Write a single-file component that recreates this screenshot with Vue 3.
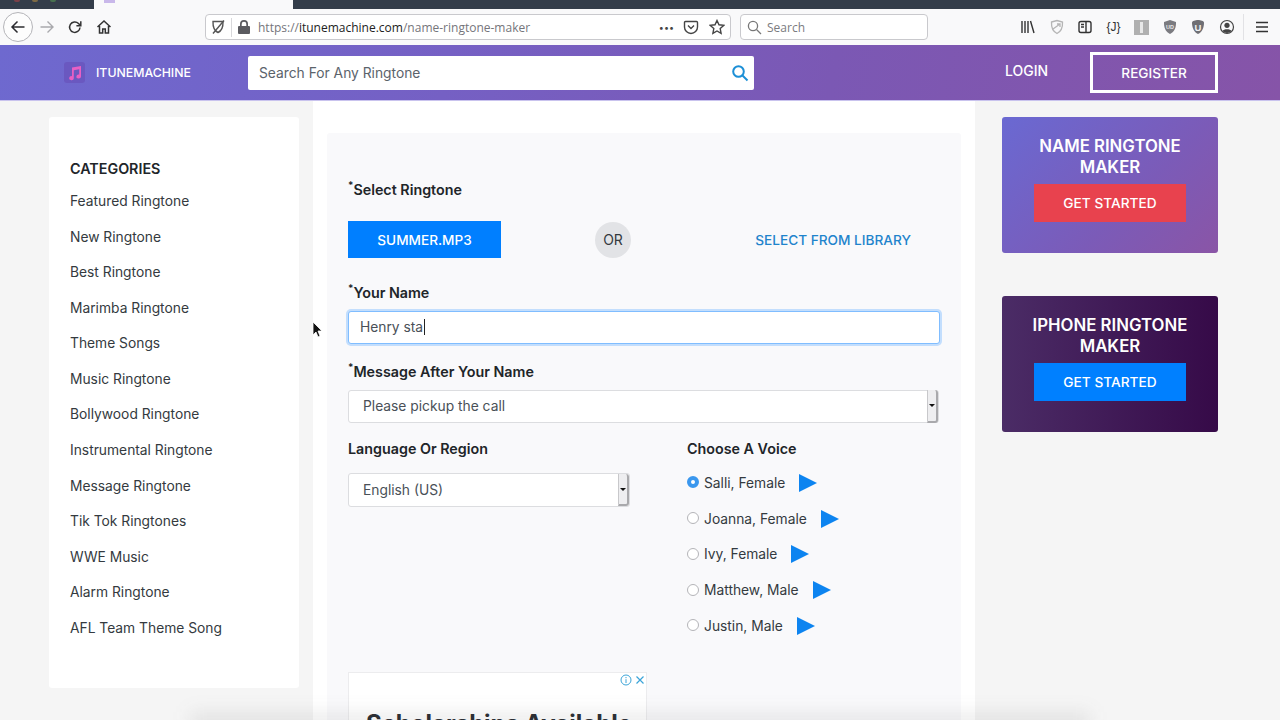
<template>
  <div class="page">
    <div class="tabstrip">
      <span class="light red"></span>
      <span class="light amber"></span>
      <span class="light green"></span>
      <div class="tab"><span class="tab-icon"></span></div>
    </div>

    <div class="toolbar">
      <div class="nav">
        <button class="back">
          <svg width="18" height="18" viewBox="0 0 18 18" fill="none" stroke="#2b2b2f" stroke-width="1.5"><path d="M15.500 9H3M8.500 3.500 3 9l5.500 5.500" /></svg>
        </button>
        <svg class="fwd" width="16" height="16" viewBox="0 0 16 16" fill="none" stroke="#a9a9ad" stroke-width="1.4"><path d="M1.500 8H14M8.500 2.500 14 8l-5.500 5.500" /></svg>
        <svg class="reload" width="16" height="16" viewBox="0 0 16 16" fill="none" stroke="#333" stroke-width="1.5"><path d="M13 8.500A5.200 5.200 0 1 1 11.500 4.500L13.500 6.500" /><path d="M13.800 2.300v4.400H9.400" /></svg>
        <svg class="home" width="16" height="16" viewBox="0 0 16 16" fill="none" stroke="#333" stroke-width="1.5"><path d="M1.500 8 8 2l6.500 6M3.500 7v7h3.200v-4h2.600v4h3.200V7" /></svg>
      </div>

      <div class="urlbar">
        <svg class="shield" width="16" height="16" viewBox="0 0 16 16" fill="none" stroke="#555" stroke-width="1.400"><path d="M3 2.500h10c.2 5.500-1.500 9.500-5 11-3.500-1.500-5.200-5.500-5-11z" /><path d="M14 1.500 3 14.500" /></svg>
        <span class="url-sep"></span>
        <svg class="lock" width="12" height="14" viewBox="0 0 12 14" fill="#5b5b60"><path d="M2 6V4a4 4 0 0 1 8 0v2h1a1 1 0 0 1 1 1v6a1 1 0 0 1-1 1H1a1 1 0 0 1-1-1V7a1 1 0 0 1 1-1zm1.700 0h4.600V4a2.300 2.300 0 0 0-4.600 0z" /></svg>
        <span class="url"><i>https://</i>itunemachine.com<i>/name-ringtone-maker</i></span>
        <span class="dots">•••</span>
        <svg class="pocket" width="16" height="16" viewBox="0 0 16 16" fill="none" stroke="#444" stroke-width="1.400"><path d="M2.500 2.500h11a1 1 0 0 1 1 1V8a6.500 6.500 0 0 1-13 0V3.500a1 1 0 0 1 1-1z" /><path d="m5 6.500 3 3 3-3" /></svg>
        <svg class="star" width="16" height="16" viewBox="0 0 16 16" fill="none" stroke="#444" stroke-width="1.400"><path d="m8 1.500 2 4.300 4.700.6-3.500 3.200.9 4.700L8 12l-4.100 2.300.9-4.700L1.300 6.400 6 5.800z" /></svg>
      </div>

      <div class="searchbar">
        <svg width="15" height="15" viewBox="0 0 15 15" fill="none" stroke="#777" stroke-width="1.300"><circle cx="6" cy="6" r="4.600" /><path d="m9.500 9.500 4.500 4.500" /></svg>
        <span>Search</span>
      </div>

      <div class="tools">
        <svg width="16" height="16" viewBox="0 0 16 16" fill="none" stroke="#333" stroke-width="1.400"><path d="M2 2v12M5 2v12M8 2v12M10.500 2l3.500 12" /></svg>
        <svg width="16" height="16" viewBox="0 0 16 16" fill="none" stroke="#b5b5b5" stroke-width="1.300"><path d="M2.500 3 8 1.500 13.500 3c.3 5.500-1.500 9.500-5.500 11.500C4 12.500 2.200 8.500 2.500 3z" /><path d="m4 10 7-5M8 5h3v3" /></svg>
        <svg width="16" height="16" viewBox="0 0 16 16" fill="none" stroke="#333" stroke-width="1.400"><rect x="2" y="2.500" width="12" height="11" rx="2" /><path d="M9 2.500v11" /><path d="M4 5.500h3M4 8h3" /></svg>
        <span class="braces">{J}</span>
        <span class="ext-box"><b></b></span>
        <svg width="16" height="16" viewBox="0 0 16 16" fill="#7b7b80"><path d="M8 1 14 3c.2 5.500-1.500 9.800-6 12C3.500 12.800 1.800 8.500 2 3z" /><text x="8" y="9.500" text-anchor="middle" font-size="5.500" font-weight="700" font-family="Liberation Sans, sans-serif" fill="#e8e8e8">UD</text></svg>
        <svg width="16" height="16" viewBox="0 0 16 16" fill="#6f6f74"><path d="M8 1c2.500 0 6 1 6 2.500 0 5.500-2 9.500-6 11.500-4-2-6-6-6-11.500C2 2 5.500 1 8 1z" /><text x="8" y="11.500" text-anchor="middle" font-size="9.500" font-weight="700" font-family="Liberation Sans, sans-serif" fill="#f2f2f2">U</text></svg>
        <svg width="16" height="16" viewBox="0 0 16 16"><circle cx="8" cy="8" r="6.500" fill="none" stroke="#444" stroke-width="1.200" /><circle cx="8" cy="6.300" r="2.600" fill="#444" /><path d="M3.500 12c1-2.500 8-2.500 9 0-2 2.600-7 2.600-9 0z" fill="#444" /></svg>
        <span class="tool-sep"></span>
        <svg width="14" height="14" viewBox="0 0 14 14" fill="none" stroke="#333" stroke-width="1.500"><path d="M1 2.500h12M1 7h12M1 11.500h12" /></svg>
      </div>
    </div>

    <header class="site-head">
      <div class="brand">
        <span class="brand-icon">
          <svg width="14" height="16" viewBox="0 0 14 16" fill="#e85fc4"><path d="M4 2.500 13 1v10.500a2.300 2 0 1 1-1.800-2V4.300L5.800 5.200v8a2.300 2 0 1 1-1.800-2z" /></svg>
        </span>
        <span class="brand-name">ITUNEMACHINE</span>
      </div>
      <div class="site-search">
        <span>Search For Any Ringtone</span>
        <svg width="18" height="18" viewBox="0 0 18 18" fill="none" stroke="#1c8fd6" stroke-width="2"><circle cx="7.500" cy="7.500" r="5.300" /><path d="m11.500 11.500 5 5" /></svg>
      </div>
      <a class="login">LOGIN</a>
      <a class="register">REGISTER</a>
    </header>

    <div class="content">
      <aside class="sidebar">
        <h3>CATEGORIES</h3>
        <ul>
          <li v-for="cat in categories" :key="cat">{{ cat }}</li>
        </ul>
      </aside>

      <main class="main">
        <div class="panel">
          <label class="field-label first"><sup>*</sup>Select Ringtone</label>
          <div class="pick-row">
            <button class="file-btn">SUMMER.MP3</button>
            <span class="or">OR</span>
            <a class="library">SELECT FROM LIBRARY</a>
          </div>

          <label class="field-label name"><sup>*</sup>Your Name</label>
          <div class="name-input">Henry sta<span class="caret"></span></div>

          <label class="field-label msg"><sup>*</sup>Message After Your Name</label>
          <div class="select">
            <span>Please pickup the call</span>
            <span class="select-arrow"></span>
          </div>

          <div class="two-col">
            <div class="col-lang">
              <label class="field-label">Language Or Region</label>
              <div class="select lang">
                <span>English (US)</span>
                <span class="select-arrow"></span>
              </div>
            </div>
            <div class="col-voice">
              <label class="field-label">Choose A Voice</label>
              <div class="voice" v-for="(v, i) in voices" :key="v">
                <span class="radio" :class="{ on: i === 0 }"></span>
                <span class="voice-name">{{ v }}</span>
                <span class="play"></span>
              </div>
            </div>
          </div>

          <div class="ad">
            <div class="ad-tools">
              <svg width="12" height="12" viewBox="0 0 12 12" fill="none" stroke="#3ba4d8" stroke-width="1"><circle cx="6" cy="6" r="5" /><path d="M6 3v1.200M6 5.200V9" /></svg>
              <svg width="10" height="10" viewBox="0 0 10 10" fill="none" stroke="#3ba4d8" stroke-width="1.200"><path d="m1.500 1.500 7 7M8.500 1.500l-7 7" /></svg>
            </div>
            <div class="ad-title">Scholarships Available</div>
          </div>
        </div>
      </main>

      <aside class="promos">
        <div class="promo purple">
          <h4>NAME RINGTONE MAKER</h4>
          <button class="red">GET STARTED</button>
        </div>
        <div class="promo dark">
          <h4>IPHONE RINGTONE MAKER</h4>
          <button class="blue">GET STARTED</button>
        </div>
      </aside>
    </div>

    <div class="bottom-shade"></div>

    <svg class="cursor" width="12" height="18" viewBox="0 0 12 18"><path d="M1 1v13l3-3 2 5 2-1-2-5h4z" fill="#111" stroke="#fff" stroke-width=".8" /></svg>
  </div>
</template>

<script setup>
const categories = [
  'Featured Ringtone',
  'New Ringtone',
  'Best Ringtone',
  'Marimba Ringtone',
  'Theme Songs',
  'Music Ringtone',
  'Bollywood Ringtone',
  'Instrumental Ringtone',
  'Message Ringtone',
  'Tik Tok Ringtones',
  'WWE Music',
  'Alarm Ringtone',
  'AFL Team Theme Song',
]

const voices = ['Salli, Female', 'Joanna, Female', 'Ivy, Female', 'Matthew, Male', 'Justin, Male']
</script>

<style>
html, body {
  margin: 0;
  height: 100%;
  overflow: hidden;
}
</style>

<style scoped>
.page {
  position: relative;
  width: 1280px;
  height: 720px;
  overflow: hidden;
  background: #f5f5f5;
  font-family: Inter, "Liberation Sans", sans-serif;
  color: #212529;
}

.tabstrip {
  position: relative;
  height: 9px;
  background: #343d4a;
  padding-left: 94px;
}
.light {
  position: absolute;
  top: 0;
  width: 6px;
  height: 2px;
  border-radius: 0 0 3px 3px;
}
.light.red { left: 14px; background: #7a4048; }
.light.amber { left: 32px; background: #7d6a45; }
.light.green { left: 50px; background: #47704f; }
.tab {
  width: 199px;
  height: 9px;
  background: #f9f9fa;
}
.tab-icon {
  display: block;
  width: 11px;
  height: 3px;
  margin-left: 10px;
  background: #c9b8ea;
}

.toolbar {
  height: 36px;
  display: flex;
  align-items: center;
  background: #f9f9fa;
}
.nav {
  display: flex;
  align-items: center;
  width: 205px;
  padding-left: 3px;
  box-sizing: border-box;
}
.back {
  width: 30px;
  height: 30px;
  padding: 0;
  border: 1px solid #b5b5b9;
  border-radius: 50%;
  background: #fdfdfd;
  display: flex;
  align-items: center;
  justify-content: center;
}
.fwd { margin-left: 6px; }
.reload { margin-left: 12px; }
.home { margin-left: 13px; }

.urlbar {
  width: 526px;
  height: 26px;
  box-sizing: border-box;
  display: flex;
  align-items: center;
  background: #fff;
  border: 1px solid #c9c9cd;
  border-radius: 4px;
  padding: 0 4px;
}
.url-sep {
  width: 1px;
  height: 19px;
  background: #d8d8db;
  margin: 0 6px 0 5px;
}
.lock { margin-right: 8px; }
.url {
  flex: 1;
  font-size: 12px;
  color: #222;
  font-family: "Open Sans", "Liberation Sans", sans-serif;
}
.url i {
  font-style: normal;
  color: #75757b;
}
.dots {
  font-size: 9px;
  color: #444;
  margin-right: 9px;
}
.pocket { margin-right: 10px; }
.star { margin-right: 1px; }

.searchbar {
  width: 188px;
  height: 26px;
  box-sizing: border-box;
  margin-left: 9px;
  display: flex;
  align-items: center;
  gap: 5px;
  background: #fff;
  border: 1px solid #c9c9cd;
  border-radius: 4px;
  padding-left: 6px;
  font-size: 12px;
  font-family: "Open Sans", "Liberation Sans", sans-serif;
  color: #7b7b80;
}

.tools {
  flex: 1;
  display: flex;
  align-items: center;
  padding-left: 92px;
  gap: 12.500px;
}
.braces {
  font-size: 12px;
  width: 16px;
  text-align: center;
  white-space: nowrap;
  font-family: "Liberation Sans", sans-serif;
  color: #333;
}
.ext-box {
  width: 15px;
  height: 15px;
  background: #b0b0b0;
  display: flex;
  justify-content: center;
}
.ext-box b {
  width: 3px;
  height: 11px;
  margin-top: 2px;
  background: #e8e8e8;
}
.tool-sep {
  width: 1px;
  height: 26px;
  background: #e2e2e5;
  margin: 0 -2px 0 -4px;
}

.site-head {
  height: 56px;
  display: flex;
  align-items: center;
  background: linear-gradient(100deg, #6e69cf 0%, #7560c4 35%, #7b58b4 65%, #8654a8 100%);
  border-bottom: 1px solid #c9c3ee;
  box-sizing: border-box;
  padding-left: 64px;
}
.brand {
  width: 184px;
  display: flex;
  align-items: center;
  gap: 11px;
}
.brand-icon {
  width: 21px;
  height: 21px;
  border-radius: 3px;
  background: #6a58c0;
  display: flex;
  align-items: center;
  justify-content: center;
}
.brand-name {
  font-size: 12.300px;
  font-weight: 500;
  color: #fff;
}
.site-search {
  width: 506px;
  height: 34px;
  box-sizing: border-box;
  background: #fff;
  border-radius: 2px;
  display: flex;
  align-items: center;
  justify-content: space-between;
  padding: 0 5px 0 11px;
  font-size: 13.800px;
  color: #5b636b;
}
.login {
  margin-left: 251px;
  margin-bottom: 4px;
  font-size: 14px;
  font-weight: 500;
  color: #fff;
}
.register {
  margin-left: 42px;
  width: 128px;
  height: 41px;
  box-sizing: border-box;
  border: 3px solid #fff;
  display: flex;
  align-items: center;
  justify-content: center;
  font-size: 13.600px;
  font-weight: 500;
  color: #fff;
}

.content {
  display: flex;
  align-items: flex-start;
  padding-left: 49px;
}

.sidebar {
  width: 250px;
  height: 571px;
  margin-top: 16px;
  box-sizing: border-box;
  background: #fff;
  border-radius: 3px;
  padding: 43px 0 0 21px;
}
.sidebar h3 {
  margin: 0 0 7px;
  font-size: 14.300px;
  line-height: 17px;
  font-weight: 600;
  color: #212529;
}
.sidebar ul {
  margin: 0;
  padding: 0;
  list-style: none;
}
.sidebar li {
  height: 35.580px;
  line-height: 35.580px;
  font-size: 13.800px;
  color: #343a40;
}

.main {
  width: 662px;
  height: 619px;
  margin-left: 14px;
  box-sizing: border-box;
  background: #fff;
  padding: 32px 14px 0;
}
.panel {
  height: 587px;
  box-sizing: border-box;
  background: #f9f9fb;
  border-radius: 3px 3px 0 0;
  padding: 47.500px 21px 0;
}

.field-label {
  display: block;
  font-size: 14.300px;
  font-weight: 600;
  line-height: 17px;
  color: #212529;
}
.field-label sup {
  font-size: 10px;
  line-height: 0;
}

.pick-row {
  display: flex;
  align-items: center;
  margin-top: 23.500px;
}
.file-btn {
  width: 153px;
  height: 37px;
  border: 0;
  padding: 0;
  background: #007fff;
  color: #fff;
  font: 500 13.600px Inter, "Liberation Sans", sans-serif;
}
.or {
  width: 36px;
  height: 36px;
  margin-left: 94px;
  border-radius: 50%;
  background: #e2e3e6;
  display: flex;
  align-items: center;
  justify-content: center;
  font-size: 14px;
  color: #343a40;
}
.library {
  margin-left: auto;
  margin-right: 29px;
  font-size: 13.650px;
  font-weight: 500;
  color: #1f84cc;
}

.field-label.name { margin-top: 25.500px; }
.name-input {
  height: 33px;
  width: 592px;
  margin-top: 10.500px;
  box-sizing: border-box;
  background: #fff;
  border: 1px solid #80bdff;
  border-radius: 3px;
  box-shadow: 0 0 0 2px rgba(128, 189, 255, 0.45);
  padding-left: 11px;
  font-size: 13.800px;
  line-height: 31px;
  color: #495057;
}
.caret {
  display: inline-block;
  width: 1px;
  height: 16px;
  margin-left: 1px;
  background: #222;
  vertical-align: -3px;
}

.field-label.msg { margin-top: 19px; }
.select {
  height: 33.500px;
  width: 591px;
  margin-top: 9.500px;
  box-sizing: border-box;
  background: #fff;
  border: 1px solid #dcdde0;
  border-radius: 3px;
  display: flex;
  align-items: center;
  justify-content: space-between;
  padding-left: 14px;
  font-size: 13.800px;
  color: #495057;
}
.select.lang {
  width: 282px;
  margin-top: 16.500px;
}
.select-arrow {
  position: relative;
  width: 11px;
  height: 32.500px;
  box-sizing: border-box;
  background: #eeeef0;
  border-left: 1px solid #c8c8cb;
  border-right: 2px solid #a9a9ac;
  border-bottom: 2px solid #a9a9ac;
  border-radius: 0 3px 3px 0;
}
.select-arrow::after {
  content: "";
  position: absolute;
  left: 1px;
  top: 14px;
  border: 3px solid transparent;
  border-top: 3px solid #111;
}

.two-col {
  display: flex;
  margin-top: 16.500px;
}
.col-lang { width: 339px; }
.col-voice .field-label { margin-bottom: 8.500px; }
.voice {
  height: 35.750px;
  display: flex;
  align-items: center;
  font-size: 13.800px;
  color: #343a40;
}
.radio {
  width: 12px;
  height: 12px;
  box-sizing: border-box;
  border: 1px solid #b4b4b8;
  border-radius: 50%;
  background: #fff;
  margin-right: 5px;
  margin-bottom: 1px;
}
.radio.on {
  border: 4.500px solid #3a97ee;
}
.voice-name { margin-right: 14px; }
.play {
  width: 0;
  height: 0;
  border-left: 18px solid #0d84f0;
  border-top: 9px solid transparent;
  border-bottom: 9px solid transparent;
}

.ad {
  position: relative;
  width: 299px;
  height: 80px;
  margin-top: 28px;
  box-sizing: border-box;
  background: #fff;
  border: 1px solid #ececee;
  overflow: hidden;
}
.ad-tools {
  position: absolute;
  top: 1px;
  right: 1px;
  display: flex;
  align-items: center;
  gap: 3px;
}
.ad-title {
  margin: 36px 0 0 17px;
  font-size: 24px;
  font-weight: 700;
  white-space: nowrap;
  color: #2a2d33;
}

.promos {
  width: 216px;
  margin-left: 27px;
  padding-top: 16px;
  display: flex;
  flex-direction: column;
  gap: 43px;
}
.promo {
  height: 136px;
  box-sizing: border-box;
  border-radius: 3px;
  padding-top: 19px;
  display: flex;
  flex-direction: column;
  align-items: center;
  text-align: center;
}
.promo.purple {
  background: linear-gradient(135deg, #6a69d2 0%, #7b5bb8 60%, #8a55a6 100%);
}
.promo.dark {
  background: linear-gradient(90deg, #4b2c66 0%, #360a48 100%);
}
.promo h4 {
  margin: 0;
  width: 170px;
  font-size: 16.800px;
  line-height: 21px;
  font-weight: 600;
  color: #fff;
}
.promo button {
  width: 152px;
  height: 38px;
  margin-top: 6px;
  border: 0;
  padding: 0;
  color: #fff;
  font: 500 13.700px Inter, "Liberation Sans", sans-serif;
}
.promo .red { background: #e8424e; }
.promo .blue { background: #0080ff; }

.bottom-shade {
  position: absolute;
  left: 190px;
  right: 190px;
  bottom: -14px;
  height: 22px;
  background: rgba(80, 80, 80, 0.1);
  filter: blur(9px);
  pointer-events: none;
}

.cursor {
  position: absolute;
  left: 312px;
  top: 321px;
}
</style>
